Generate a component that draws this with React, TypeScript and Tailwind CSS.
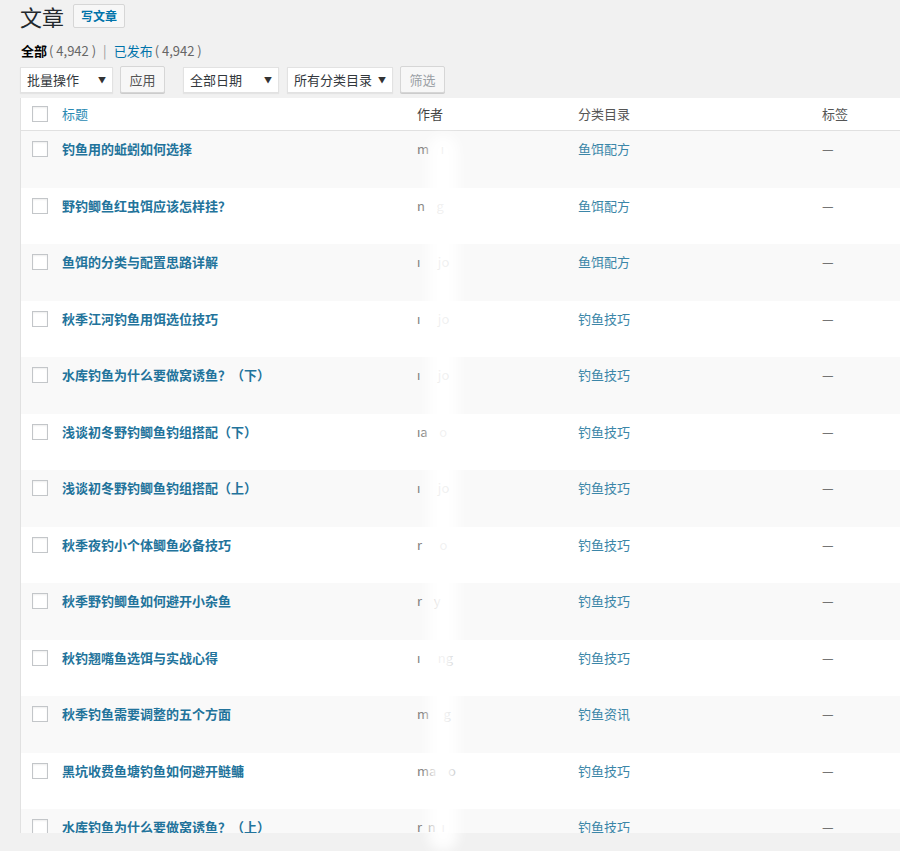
import React from "react";

const rows: { t: string; a: string; c: string }[] = [
  { t: "钓鱼用的蚯蚓如何选择", a: "m    ı", c: "鱼饵配方" },
  { t: "野钓鲫鱼红虫饵应该怎样挂？", a: "n    g", c: "鱼饵配方" },
  { t: "鱼饵的分类与配置思路详解", a: "ı      jo", c: "鱼饵配方" },
  { t: "秋季江河钓鱼用饵选位技巧", a: "ı      jo", c: "钓鱼技巧" },
  { t: "水库钓鱼为什么要做窝诱鱼？（下）", a: "ı      jo", c: "钓鱼技巧" },
  { t: "浅谈初冬野钓鲫鱼钓组搭配（下）", a: "ıa    o", c: "钓鱼技巧" },
  { t: "浅谈初冬野钓鲫鱼钓组搭配（上）", a: "ı      jo", c: "钓鱼技巧" },
  { t: "秋季夜钓小个体鲫鱼必备技巧", a: "r      o", c: "钓鱼技巧" },
  { t: "秋季野钓鲫鱼如何避开小杂鱼", a: "r    y", c: "钓鱼技巧" },
  { t: "秋钓翘嘴鱼选饵与实战心得", a: "ı      ng", c: "钓鱼技巧" },
  { t: "秋季钓鱼需要调整的五个方面", a: "m     g", c: "钓鱼资讯" },
  { t: "黑坑收费鱼塘钓鱼如何避开鲢鳙", a: "ma    o", c: "钓鱼技巧" },
  { t: "水库钓鱼为什么要做窝诱鱼？（上）", a: "r  n  ı", c: "钓鱼技巧" },
];

const font = { fontFamily: '"Noto Sans CJK SC", "Noto Sans", sans-serif' };

function Checkbox() {
  return <div className="w-4 h-4 border border-[#c3c6c9] bg-white shadow-[inset_0_1px_2px_rgba(0,0,0,0.07)]" />;
}

function Select({ label, w }: { label: string; w: string }) {
  return (
    <div className={`${w} h-[26px] bg-white border border-[#e2e2e2] shadow-[0_1px_1px_rgba(0,0,0,0.05)] flex items-center justify-between pl-[6px] pr-[6px] text-[13px] text-[#32373c]`}>
      <span>{label}</span>
      <span className="text-[8px] text-[#333]">▼</span>
    </div>
  );
}

function Btn({ label, muted }: { label: string; muted?: boolean }) {
  return (
    <div className={`w-[45px] h-[27px] bg-[#f7f7f7] border border-[#d6d6d6] rounded-[2px] shadow-[0_1px_0_#ccc] flex items-center justify-center text-[13px] ${muted ? "text-[#9aa0a5]" : "text-[#555]"}`}>
      {label}
    </div>
  );
}

export default function App() {
  return (
    <div className="w-[900px] h-[851px] bg-[#f1f1f1] overflow-hidden relative" style={font}>
      <div className="pl-[20px] pt-[2px] flex items-center gap-[9px] h-[30px]">
        <span className="text-[22px] text-[#23282d] leading-[28px]">文章</span>
        <span className="h-[24px] px-[7px] flex items-center border border-[#d6d6d6] bg-[#f7f7f7] rounded-[2px] text-[12px] font-bold text-[#0073aa]">写文章</span>
      </div>
      <div className="pl-[21px] mt-[11px] h-[20px] flex items-center text-[13px] text-[#666]">
        <span className="font-bold text-[#000]">全部</span>
        <span className="ml-[2px]">( 4,942 )</span>
        <span className="mx-[7px] text-[#999]">|</span>
        <span className="text-[#0073aa]">已发布</span>
        <span className="ml-[2px]">( 4,942 )</span>
      </div>
      <div className="pl-[20px] mt-[5px] flex items-center h-[27px]">
        <Select label="批量操作" w="w-[93px]" />
        <div className="ml-[7px]"><Btn label="应用" /></div>
        <div className="ml-[18px]"><Select label="全部日期" w="w-[96px]" /></div>
        <div className="ml-[8px]"><Select label="所有分类目录" w="w-[106px]" /></div>
        <div className="ml-[7px]"><Btn label="筛选" muted /></div>
      </div>
      <div className="ml-[20px] mt-[5px] h-[735px] overflow-hidden border-l border-[#e1e1e1] bg-white">
        <div className="grid grid-cols-[41px_355px_161px_244px_1fr] h-[33px] items-center border-b border-[#e1e1e1] bg-white text-[13px]">
          <div className="pl-[11px]"><Checkbox /></div>
          <div className="text-[#2a8ab3]">标题</div>
          <div className="text-[#444]">作者</div>
          <div className="text-[#555]">分类目录</div>
          <div className="text-[#555]">标签</div>
        </div>
        {rows.map((r, i) => (
          <div
            key={i}
            className={`grid grid-cols-[41px_355px_161px_244px_1fr] h-[56.5px] items-start pt-[8px] text-[13px] ${i % 2 === 0 ? "bg-[#f9f9f9]" : "bg-white"}`}
          >
            <div className="pl-[11px] pt-[2px]"><Checkbox /></div>
            <div className="font-bold text-[#22739b]">{r.t}</div>
            <div className="text-[#777] whitespace-pre">{r.a}</div>
            <div className="text-[#3b86a8]">{r.c}</div>
            <div className="text-[#555]">—</div>
          </div>
        ))}
      </div>
      <div className="absolute left-[428px] top-[135px] w-[30px] h-[716px] bg-white/90 blur-[6px] rounded-full pointer-events-none" />
    </div>
  );
}
